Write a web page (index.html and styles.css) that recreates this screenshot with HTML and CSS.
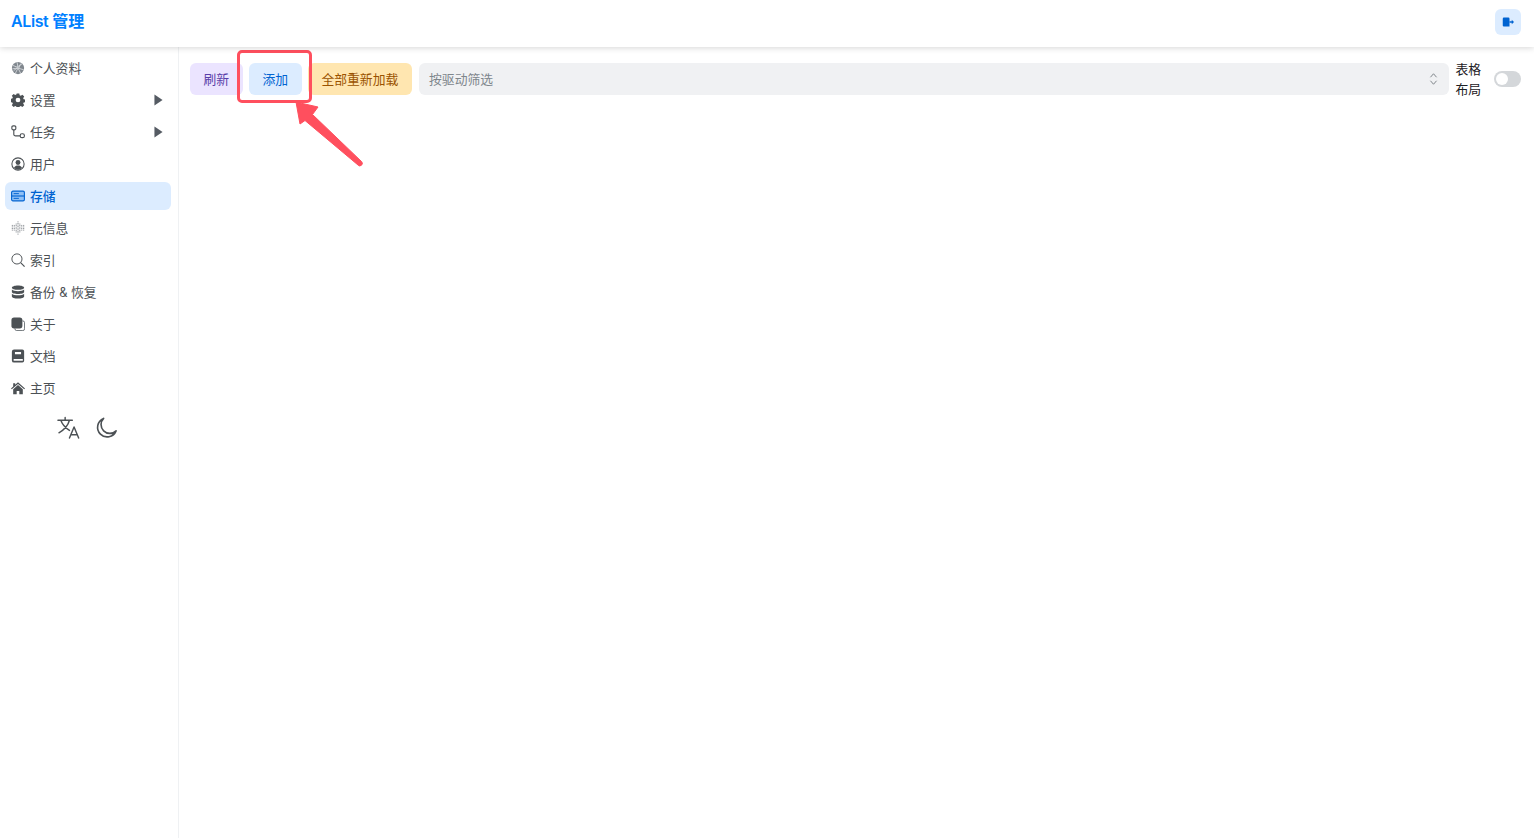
FILE: index.html
```html
<!DOCTYPE html>
<html lang="zh">
<head>
<meta charset="utf-8">
<title>AList 管理</title>
<link rel="stylesheet" href="styles.css">
</head>
<body>
<header class="topbar">
  <div class="brand"><span class="latin">AList</span> 管理</div>
  <button class="logout" aria-label="退出">
    <svg viewBox="0 0 16 16" width="12" height="12"><path fill="#0063d1" d="M1 3.500A1.500 1.500 0 0 1 2.500 2h6A1.500 1.500 0 0 1 10 3.500V14H2.500A1.500 1.500 0 0 1 1 12.500z"/><path fill="#0063d1" d="M10 7h3V5l3 3-3 3V9h-3z"/></svg>
  </button>
</header>
<div class="shell">
  <nav class="sidebar">
    <a class="item"><svg class="ico" viewBox="0 0 16 16"><circle cx="8" cy="8" r="7" fill="#80878e"/><path d="M2 5l5 2 6-4M1.500 9l6-1 7 2M5 14l3-6 3 6M7 1.500l1 6.500M3 11l4-3M11 3l-2 5" stroke="#d5d8db" stroke-width="1" fill="none"/></svg><span>个人资料</span></a>
    <a class="item"><svg class="ico" viewBox="0 0 16 16"><path fill="#4c5155" fill-rule="evenodd" d="M6.500.500h3l.4 2.100 1.300.6 1.800-1.200 2.100 2.100-1.200 1.800.6 1.300 2 .4v2.800l-2 .4-.6 1.300 1.200 1.800-2.100 2.100-1.800-1.200-1.300.6-.4 2.100h-3l-.4-2.100-1.300-.6-1.800 1.200-2.100-2.100 1.200-1.800-.6-1.300-2-.4V6.600l2-.4.600-1.300-1.200-1.800 2.100-2.100 1.800 1.200 1.300-.6zM8 5.300a2.700 2.700 0 1 0 0 5.400 2.700 2.700 0 0 0 0-5.400z"/></svg><span>设置</span><svg class="caret" viewBox="0 0 10 12"><path fill="#555b63" d="M.5 0l9 6-9 6z"/></svg></a>
    <a class="item"><svg class="ico" viewBox="0 0 16 16" fill="none" stroke="#4c5155" stroke-width="1.300"><rect x="1" y="1" width="4.500" height="4.500" rx="1.500"/><rect x="10.500" y="10" width="4.800" height="4.500" rx="2"/><path d="M3.200 5.500v5a2 2 0 0 0 2 2h5.300"/></svg><span>任务</span><svg class="caret" viewBox="0 0 10 12"><path fill="#555b63" d="M.5 0l9 6-9 6z"/></svg></a>
    <a class="item"><svg class="ico" viewBox="0 0 16 16"><circle cx="8" cy="8" r="7" fill="none" stroke="#4c5155" stroke-width="1.200"/><circle cx="8" cy="6.200" r="2.800" fill="#4c5155"/><path fill="#4c5155" d="M3.400 12.300C4.400 10.400 6 9.800 8 9.800s3.600.6 4.600 2.500A6.300 6.300 0 0 1 8 14.500a6.300 6.300 0 0 1-4.600-2.200z"/></svg><span>用户</span></a>
    <a class="item active"><svg class="ico" viewBox="0 0 16 16" fill="none" stroke="#0063d1" stroke-width="1.300"><rect x=".7" y="2.500" width="14.600" height="11" rx="1.500" fill="#8fc0f5"/><path d="M.7 8h14.600"/><path d="M3 5.300h6M3 10.700h6" stroke-width="1.100"/></svg><span>存储</span></a>
    <a class="item"><svg class="ico" viewBox="0 0 16 16" fill="none" stroke="#6f757b" stroke-width="1.100" stroke-dasharray="1 .8"><path d="M1.500 4.500v7M3.700 4.500v7M5.900 3v10M8 .5v15M10.100 3v10M12.300 4.500v7M14.500 4.500v7"/></svg><span>元信息</span></a>
    <a class="item"><svg class="ico" viewBox="0 0 16 16" fill="none" stroke="#4c5155" stroke-width="1.100"><circle cx="6.800" cy="6.800" r="5.800"/><path d="M11 11l4.500 4.500" stroke-width="1.400"/></svg><span>索引</span></a>
    <a class="item"><svg class="ico" viewBox="0 0 16 16" fill="#4c5155"><path d="M8 .5c3.800 0 7 1.100 7 2.500S11.800 5.500 8 5.500 1 4.400 1 3 4.200.5 8 .5z"/><path d="M1 5.200C2.200 6.400 5.100 7 8 7s5.800-.6 7-1.800v2.800C15 9.300 11.800 10.300 8 10.300S1 9.300 1 8z"/><path d="M1 10C2.200 11.200 5.100 11.800 8 11.800s5.800-.6 7-1.800v3c0 1.400-3.200 2.500-7 2.500S1 14.400 1 13z"/></svg><span>备份 &amp; 恢复</span></a>
    <a class="item"><svg class="ico" viewBox="0 0 16 16"><path fill="none" stroke="#5d6368" stroke-width="1" d="M13 4.500h.5a2 2 0 0 1 2 2v7a2 2 0 0 1-2 2h-7a2 2 0 0 1-2-2V13"/><rect x=".5" y=".5" width="12.500" height="12.500" rx="3" fill="#4c5155"/></svg><span>关于</span></a>
    <a class="item"><svg class="ico" viewBox="0 0 16 16"><path fill="#4c5155" fill-rule="evenodd" d="M3.500.5H13a2 2 0 0 1 2 2v11a2 2 0 0 1-2 2H3.500A2.500 2.500 0 0 1 1 13V3A2.500 2.500 0 0 1 3.500.5zM4.500 3.500v2.500h7V3.500zM3 11.500v2H13.500v-2z"/></svg><span>文档</span></a>
    <a class="item"><svg class="ico" viewBox="0 0 16 16"><path fill="#4c5155" d="M8 1.500l8 7-.9 1L8 3.300.9 9.500l-.9-1L2.500 6.300V2.500h2.300v1.800z"/><path fill="#4c5155" d="M8 4.700l5.500 4.800v5.500H9.500v-3.500h-3V15h-4V9.500z"/></svg><span>主页</span></a>
    <div class="tools">
      <svg class="tool" viewBox="0 0 24 24" fill="none" stroke="#4c5155" stroke-width="1.500" stroke-linecap="round" stroke-linejoin="round"><path d="M1 4.500h15M8.500 1.500v3M13 4.500C11.500 10 7.500 14.500 2 17.500M4 4.500C5.500 9 9 12.500 13 15"/><path d="M13 23l4.800-11.500L22.600 23M14.600 19.500h6.400"/></svg>
      <svg class="tool" viewBox="0 0 24 24" fill="none" stroke="#4c5155" stroke-width="1.700" stroke-linejoin="round"><path d="M9 2.500A10 10 0 1 0 22 15.500 9 9 0 0 1 9 2.500z"/></svg>
    </div>
  </nav>
  <main class="content">
    <div class="toolbar">
      <button class="btn purple">刷新</button>
      <button class="btn blue">添加</button>
      <button class="btn amber">全部重新加载</button>
      <div class="select"><span>按驱动筛选</span>
        <svg viewBox="0 0 10 16" width="9" height="14" fill="none" stroke="#7d8287" stroke-width="1.100"><path d="M1.500 6l3.500-4 3.500 4M1.500 10l3.500 4 3.500-4"/></svg>
      </div>
      <div class="layout-label">表格布局</div>
      <div class="switch"><i></i></div>
    </div>
  </main>
</div>
<div class="mark"></div>
<svg class="arrow" viewBox="0 0 82 72" width="82" height="72"><path fill="#ff4f5e" stroke="#ff4f5e" stroke-width="1" stroke-linejoin="round" d="M14 6l22 5-5.500 7.500 49.200 47.200a2 2 0 0 1-3.700 3.300L23 24.500 18 28z"/></svg>
</body>
</html>
```
FILE: styles.css
```css
* { box-sizing: border-box; }
html, body { height: 100%; }
body {
  margin: 0;
  background: #fff;
  color: #4c5155;
  font-family: Inter, "Noto Sans CJK SC", "Liberation Sans", sans-serif;
  font-size: 12.800px;
  overflow: hidden;
  position: relative;
}
.topbar {
  height: 47px;
  display: flex;
  align-items: center;
  justify-content: space-between;
  padding: 0 13px 4px 11px;
  background: #fff;
  box-shadow: 0 1px 6px rgba(0, 0, 0, 0.16);
  position: relative;
  z-index: 1;
}
.brand { color: #0080ff; font-size: 16px; font-weight: 600; line-height: 1; margin-bottom: 2px; }
.latin { letter-spacing: -0.4px; }
.logout {
  width: 26px;
  height: 26px;
  border: 0;
  border-radius: 6px;
  background: #dcecff;
  display: flex;
  align-items: center;
  justify-content: center;
  padding: 0;
}
.shell { display: flex; height: 791px; }
.sidebar {
  width: 179px;
  flex: none;
  border-right: 1px solid #eff1f3;
  padding: 7px 7px 0 4.500px;
  display: flex;
  flex-direction: column;
  gap: 4px;
}
.item {
  height: 28px;
  display: flex;
  align-items: center;
  padding: 0 8px 0 6px;
  border-radius: 6px;
  color: #4c5155;
  line-height: 1;
}
.item span { margin: 2px 0 0 5.500px; flex: 1; }
.ico { width: 14px; height: 14px; flex: none; }
.caret { width: 9px; height: 12px; flex: none; }
.item.active { background: #dcecff; color: #0063d1; font-weight: 500; }
.tools {
  display: flex;
  justify-content: center;
  gap: 15px;
  margin-top: 10px;
}
.tool { width: 23px; height: 23px; }
.content { flex: 1; padding: 12px 13px 0 11px; min-width: 0; }
.toolbar { display: flex; align-items: center; gap: 6.400px; height: 40px; }
.btn {
  height: 32px;
  padding: 2px 13.500px 0;
  border: 0;
  border-radius: 6px;
  font: inherit;
  line-height: 1;
  flex: none;
}
.purple { background: #ebe4ff; color: #5a3ea8; }
.blue { background: #dcecff; color: #0063d1; }
.amber { background: #ffe6b0; color: #9a5200; margin-right: 0.400px; }
.select {
  flex: 1;
  height: 32px;
  display: flex;
  align-items: center;
  justify-content: space-between;
  padding: 0 11px 0 10.500px;
  border-radius: 6px;
  background: #f0f1f3;
  color: #7e868c;
  line-height: 1;
  min-width: 0;
}
.select span { margin-top: 2px; }
.layout-label {
  width: 26px;
  height: 40px;
  flex: none;
  color: #1c2024;
  line-height: 20px;
  padding-top: 1px;
  margin-right: 6.100px;
}
.switch {
  width: 27px;
  height: 16px;
  flex: none;
  border-radius: 8px;
  background: #d4d7da;
  padding: 2px;
}
.switch i {
  display: block;
  width: 12px;
  height: 12px;
  border-radius: 50%;
  background: #fff;
}
.mark {
  position: absolute;
  left: 237px;
  top: 50px;
  width: 75px;
  height: 53px;
  border: 3px solid #ff4f5e;
  border-radius: 5px;
}
.arrow { position: absolute; left: 282px; top: 96px; }
```
